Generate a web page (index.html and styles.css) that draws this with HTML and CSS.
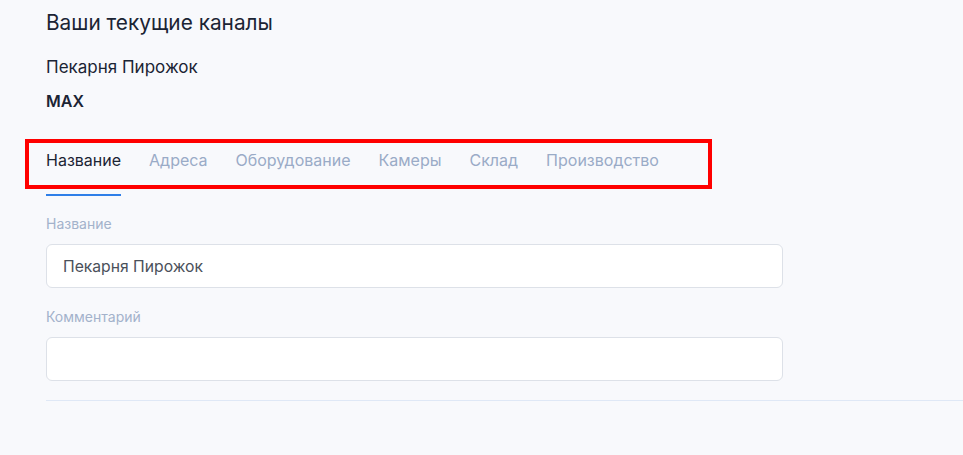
FILE: index.html
```html
<!DOCTYPE html>
<html lang="ru">
<head>
<meta charset="utf-8">
<title>Ваши текущие каналы</title>
<link rel="stylesheet" href="styles.css">
</head>
<body>
<main class="page">
  <h1 class="title">Ваши текущие каналы</h1>
  <div class="channel-name">Пекарня Пирожок</div>
  <div class="channel-type">MAX</div>

  <nav class="tabs">
    <a class="tab active">Название</a>
    <a class="tab">Адреса</a>
    <a class="tab">Оборудование</a>
    <a class="tab">Камеры</a>
    <a class="tab">Склад</a>
    <a class="tab">Производство</a>
    <span class="highlight"></span>
  </nav>

  <form class="form">
    <label class="field">
      <span class="label">Название</span>
      <input class="input" type="text" value="Пекарня Пирожок">
    </label>
    <label class="field">
      <span class="label">Комментарий</span>
      <input class="input" type="text" value="">
    </label>
  </form>
  <hr class="divider">
</main>
</body>
</html>
```

FILE: styles.css
```css
* { box-sizing: border-box; }
html, body {
  margin: 0;
  background: #f8f9fc;
  font-family: Inter, "Noto Sans", sans-serif;
}
.page {
  padding: 9px 0 0 46px;
}
.title {
  margin: 0;
  font-size: 20.8px;
  font-weight: 400;
  line-height: 28px;
  color: #1b2434;
}
.channel-name {
  margin-top: 19px;
  font-size: 17px;
  line-height: 22px;
  color: #1b2434;
}
.channel-type {
  margin-top: 12px;
  font-size: 16px;
  font-weight: 600;
  line-height: 22px;
  color: #1b2434;
}
.tabs {
  position: relative;
  display: flex;
  gap: 28px;
  margin-top: 37px;
}
.tab {
  display: block;
  padding-bottom: 23px;
  border-bottom: 2px solid transparent;
  font-size: 16px;
  line-height: 22px;
  color: #9aabc7;
  cursor: pointer;
}
.tab.active {
  color: #1b2434;
  border-bottom-color: #2f7fe8;
}
.highlight {
  position: absolute;
  left: -21px;
  top: -10px;
  width: 687px;
  height: 50px;
  border: 4px solid #ff0000;
  pointer-events: none;
}
.form {
  display: flex;
  flex-direction: column;
  gap: 19px;
  margin-top: 18px;
  width: 737px;
}
.field {
  display: flex;
  flex-direction: column;
  gap: 10px;
}
.label {
  font-size: 14px;
  line-height: 20px;
  color: #a3b2cb;
}
.input {
  width: 100%;
  height: 44px;
  padding: 0 16px;
  border: 1px solid #dde1e8;
  border-radius: 6px;
  background: #fff;
  font-family: inherit;
  font-size: 15.7px;
  color: #4a505a;
  outline: none;
}
.divider {
  margin: 19px 0 0;
  border: 0;
  border-top: 1px solid #dfe8f6;
}
```
